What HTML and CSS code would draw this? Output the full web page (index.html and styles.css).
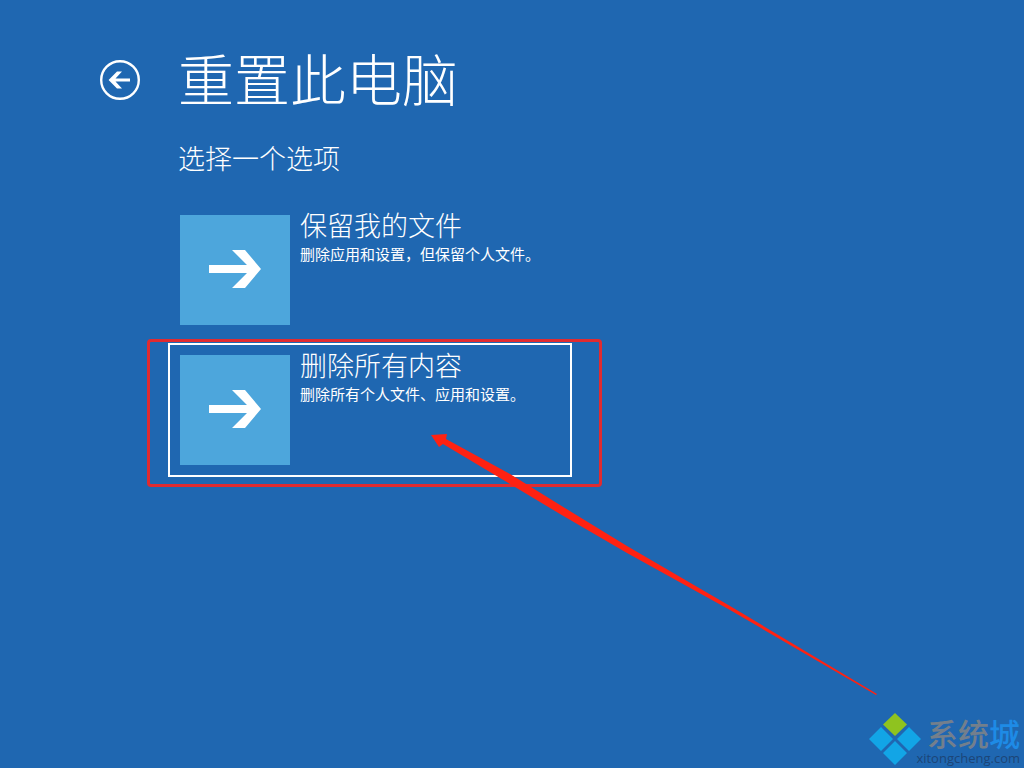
FILE: index.html
```html
<!DOCTYPE html>
<html lang="zh-CN">
<head>
<meta charset="utf-8">
<meta name="viewport" content="width=device-width, initial-scale=1">
<title>重置此电脑</title>
<link rel="stylesheet" href="styles.css">
</head>
<body>
<main class="screen">
  <button class="back" type="button" aria-label="返回">
    <svg viewBox="0 0 40 40" aria-hidden="true">
      <circle cx="20" cy="20" r="18.8" fill="none" stroke="currentColor" stroke-width="2.4"/>
      <path d="M8.600 20l8.400-8.400h5L15.500 18.500h14.500v3H15.500l6.500 6.900h-5z" fill="currentColor"/>
    </svg>
  </button>
  <div class="content">
    <h1 class="title">重置此电脑</h1>
    <p class="subtitle">选择一个选项</p>
    <div class="options">
      <button class="option" type="button">
        <svg class="tile" viewBox="0 0 110 110" aria-hidden="true">
          <path d="M29 50H67L52 35H65L81 54L65 73H52L67 58H29z" fill="#fff"/>
        </svg>
        <span class="option-text">
          <span class="option-name">保留我的文件</span>
          <span class="option-note">删除应用和设置，但保留个人文件。</span>
        </span>
      </button>
      <div class="marked">
        <button class="option option-focused" type="button">
          <svg class="tile" viewBox="0 0 110 110" aria-hidden="true">
            <path d="M29 50H67L52 35H65L81 54L65 73H52L67 58H29z" fill="#fff"/>
          </svg>
          <span class="option-text">
            <span class="option-name">删除所有内容</span>
            <span class="option-note">删除所有个人文件、应用和设置。</span>
          </span>
        </button>
        <span class="mark-frame"></span>
        <svg class="mark-arrow" viewBox="0 0 450 266" aria-hidden="true">
          <path d="M1 4L17 3L16 8L80 43L130 74L197 115L300 175L447 263L446 264L300 179L197 122L130 83L80 53L13 13L9 16z" fill="#ff2212"/>
        </svg>
      </div>
    </div>
  </div>
</main>
<div class="brand">
  <svg class="brand-logo" viewBox="0 0 54 54" aria-hidden="true">
    <path d="M27 1l12 11.500-12 11.500-12-11.500z" fill="#8fc31f"/>
    <path d="M13 15l12 12-12 12L1 27zM41 15l12 12-12 12-12-12zM27 29l12 12-12 12-12-12z" fill="#12a5e6"/>
  </svg>
  <div class="brand-text">
    <span class="brand-name">系统<span class="brand-accent">城</span></span>
    <span class="brand-site">xitongcheng.com</span>
  </div>
</div>
</body>
</html>
```
FILE: styles.css
```css
* {
  box-sizing: border-box;
}

body {
  margin: 0;
  min-height: 100vh;
  position: relative;
  overflow: hidden;
  background: #1f67b1;
  color: #fff;
  font-family: "Noto Sans CJK SC", sans-serif;
}

button {
  padding: 0;
  border: 0;
  background: none;
  color: inherit;
  font: inherit;
  text-align: left;
  cursor: pointer;
}

.screen {
  display: flex;
  align-items: flex-start;
  gap: 38px;
  padding: 41px 40px 0 100px;
}

.back {
  flex: none;
  width: 40px;
  height: 40px;
  margin-top: 19px;
}

.back svg {
  display: block;
  width: 100%;
}

.content {
  flex: 1;
}

.title {
  margin: 0;
  font-size: 56px;
  line-height: 72px;
  font-weight: 300;
}

.subtitle {
  margin: 27px 0 0;
  font-size: 27px;
  line-height: 36px;
  font-weight: 300;
}

.options {
  display: flex;
  flex-direction: column;
  align-items: flex-start;
  gap: 6px;
  max-width: 404px;
  margin: 27px 0 0 -10px;
}

.marked {
  position: relative;
  width: 100%;
}

.option {
  display: flex;
  align-items: flex-start;
  gap: 10px;
  width: 100%;
  padding: 10px;
  border: 2px solid transparent;
}

.option-focused {
  border-color: #fff;
}

.tile {
  flex: none;
  width: 110px;
  height: 110px;
  background: #4da6dc;
}

.option-text {
  display: flex;
  flex-direction: column;
  margin-top: -8px;
}

.option-name {
  font-size: 27px;
  line-height: 36px;
  font-weight: 300;
}

.option-note {
  font-size: 15px;
  line-height: 22px;
  white-space: nowrap;
}

.mark-frame {
  position: absolute;
  inset: -4px -30px -10px -21px;
  border: 3px solid #e02b30;
  border-radius: 4px;
  pointer-events: none;
}

.mark-arrow {
  position: absolute;
  left: 262px;
  top: 88px;
  width: 450px;
  height: 266px;
  pointer-events: none;
}

.brand {
  position: absolute;
  right: 4px;
  bottom: 2px;
  display: flex;
  align-items: flex-start;
}

.brand-logo {
  width: 54px;
  height: 54px;
}

.brand-text {
  display: flex;
  flex-direction: column;
  align-items: flex-end;
  margin-left: -6px;
  padding-top: 4px;
}

.brand-name {
  font-size: 31px;
  line-height: 34px;
  font-weight: 500;
  color: #737f8c;
}

.brand-accent {
  color: #1e8be6;
}

.brand-site {
  font-family: "Open Sans", sans-serif;
  font-size: 13px;
  line-height: 16px;
  font-weight: 500;
  color: #1c4577;
}
```
